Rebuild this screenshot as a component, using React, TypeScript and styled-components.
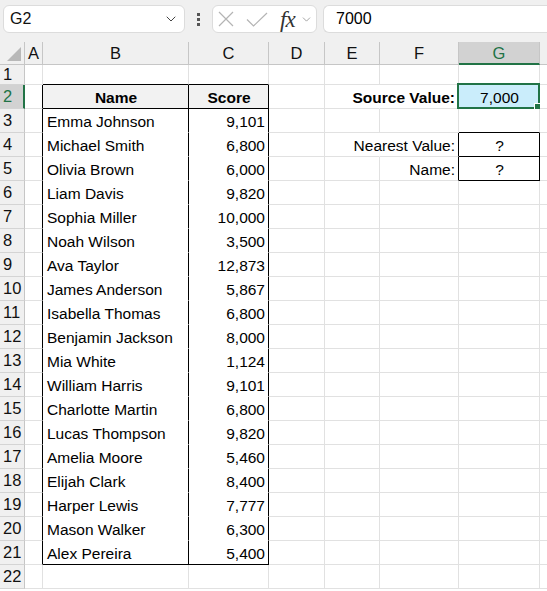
import React from 'react';
import styled, { createGlobalStyle } from 'styled-components';
import { ChevronDown } from 'lucide-react';

const GREEN = '#217346';
const GRID = '#e1e1e1';
const HEAD_BG = '#f0f0f0';
const HEAD_LINE = '#c6c6c6';

const GlobalStyle = createGlobalStyle`
  html, body {
    margin: 0;
    padding: 0;
    background: #fff;
    font-family: 'Liberation Sans', Arial, sans-serif;
    color: #000;
  }
`;

const Page = styled.div`
  width: 547px;
  height: 591px;
  overflow: hidden;
  background: #fff;
`;

const Toolbar = styled.div`
  height: 42px;
  box-sizing: border-box;
  background: #f0f0f0;
  display: flex;
  align-items: flex-start;
  padding: 5px 0 0 3px;
`;

const Box = styled.div<{ $w?: number }>`
  width: ${(p) => (p.$w ? `${p.$w}px` : 'auto')};
  height: 28px;
  box-sizing: border-box;
  background: #fff;
  border: 1px solid #dcdcdc;
  border-radius: 6px;
  display: flex;
  align-items: center;
  flex-shrink: 0;
`;

const NameBox = styled(Box)`
  justify-content: space-between;
  padding: 0 5px 0 6px;
  font-size: 16px;
  color: #111;
`;

const Dots = styled.div`
  width: 27px;
  height: 28px;
  flex-shrink: 0;
  display: flex;
  flex-direction: column;
  align-items: center;
  justify-content: center;
  gap: 2px;
  span {
    width: 3px;
    height: 3px;
    background: #555;
  }
`;

const FuncBox = styled(Box)`
  padding-left: 5px;
  color: #b4b4b4;
  svg {
    flex-shrink: 0;
  }
`;

const Fx = styled.span`
  font-family: 'Liberation Serif', 'Times New Roman', serif;
  font-style: italic;
  font-size: 23px;
  color: #333;
  margin: 0 5px 0 12px;
  letter-spacing: -1px;
  line-height: 1;
`;

const Formula = styled(Box)`
  flex: 1;
  margin-left: 6px;
  padding-left: 12px;
  font-size: 16px;
  border-right: none;
  border-radius: 6px 0 0 6px;
`;

const Sheet = styled.div`
  display: grid;
  grid-template-columns: 25px 18px 146px 80px 56px 55px 79px 81px 1fr;
  grid-template-rows: 23px 20px repeat(21, 24px);
  font-size: 15.5px;
`;

const Corner = styled.div`
  background: ${HEAD_BG};
  border-right: 1px solid ${HEAD_LINE};
  border-bottom: 1px solid ${HEAD_LINE};
  box-sizing: border-box;
  position: relative;
  &::after {
    content: '';
    position: absolute;
    right: 3px;
    bottom: 3px;
    border-style: solid;
    border-width: 0 0 14px 14px;
    border-color: transparent transparent #b8b8b8 transparent;
  }
`;

const ColHead = styled.div<{ $active?: boolean }>`
  box-sizing: border-box;
  display: flex;
  align-items: center;
  justify-content: center;
  background: ${(p) => (p.$active ? '#d2d2d2' : HEAD_BG)};
  color: ${(p) => (p.$active ? GREEN : '#111')};
  border-right: 1px solid ${HEAD_LINE};
  border-bottom: ${(p) => (p.$active ? `2px solid ${GREEN}` : `1px solid ${HEAD_LINE}`)};
  padding-top: ${(p) => (p.$active ? '1px' : '0')};
  font-size: 16.5px;
`;

const RowHead = styled.div<{ $active?: boolean }>`
  box-sizing: border-box;
  display: flex;
  align-items: center;
  padding-left: 3px;
  background: ${(p) => (p.$active ? '#d2d2d2' : HEAD_BG)};
  color: ${(p) => (p.$active ? GREEN : '#111')};
  border-right: ${(p) => (p.$active ? `2px solid ${GREEN}` : `1px solid ${HEAD_LINE}`)};
  border-bottom: 1px solid #d4d4d4;
  font-size: 16.5px;
`;

const Cell = styled.div<{
  $align?: 'left' | 'right' | 'center';
  $bold?: boolean;
  $bg?: string;
  $right?: string;
  $bottom?: string;
}>`
  box-sizing: border-box;
  position: relative;
  display: flex;
  align-items: center;
  justify-content: ${(p) =>
    p.$align === 'right' ? 'flex-end' : p.$align === 'center' ? 'center' : 'flex-start'};
  padding: 2px 3px 0 4px;
  white-space: nowrap;
  overflow: visible;
  font-weight: ${(p) => (p.$bold ? 700 : 400)};
  background: ${(p) => p.$bg || '#fff'};
  border-right: 1px solid ${(p) => p.$right || GRID};
  border-bottom: 1px solid ${(p) => p.$bottom || GRID};
`;

const Selection = styled.div`
  position: absolute;
  left: -2px;
  top: -2px;
  right: -1px;
  bottom: -1px;
  border: 2px solid ${GREEN};
  pointer-events: none;
  &::after {
    content: '';
    position: absolute;
    right: -4px;
    bottom: -4px;
    width: 6px;
    height: 6px;
    background: ${GREEN};
    border: 1px solid #fff;
  }
`;

const people: [string, string][] = [
  ['Emma Johnson', '9,101'],
  ['Michael Smith', '6,800'],
  ['Olivia Brown', '6,000'],
  ['Liam Davis', '9,820'],
  ['Sophia Miller', '10,000'],
  ['Noah Wilson', '3,500'],
  ['Ava Taylor', '12,873'],
  ['James Anderson', '5,867'],
  ['Isabella Thomas', '6,800'],
  ['Benjamin Jackson', '8,000'],
  ['Mia White', '1,124'],
  ['William Harris', '9,101'],
  ['Charlotte Martin', '6,800'],
  ['Lucas Thompson', '9,820'],
  ['Amelia Moore', '5,460'],
  ['Elijah Clark', '8,400'],
  ['Harper Lewis', '7,777'],
  ['Mason Walker', '6,300'],
  ['Alex Pereira', '5,400'],
];

const COLS = ['A', 'B', 'C', 'D', 'E', 'F', 'G', 'H'];
const INK = '#000';

type CellSpec = {
  text?: string;
  align?: 'left' | 'right' | 'center';
  bold?: boolean;
  bg?: string;
  right?: string;
  bottom?: string;
  selected?: boolean;
};

function spec(col: string, row: number): CellSpec {
  const s: CellSpec = {};
  const inTable = row >= 2 && row <= 21;
  if (col === 'A' && inTable) s.right = INK;
  if ((col === 'B' || col === 'C') && row === 1) s.bottom = INK;
  if ((col === 'B' || col === 'C') && inTable) {
    s.right = INK;
    s.bottom = row === 2 || row === 21 ? INK : '#fff';
    if (row === 2) {
      s.bg = '#f2f2f2';
      s.bold = true;
      s.align = 'center';
      s.text = col === 'B' ? 'Name' : 'Score';
    } else {
      const p = people[row - 3];
      s.text = col === 'B' ? p[0] : p[1];
      s.align = col === 'B' ? 'left' : 'right';
    }
  }
  if (col === 'E' && (row === 2 || row === 4)) s.right = '#fff';
  if (col === 'F') {
    if (row === 2) Object.assign(s, { text: 'Source Value:', bold: true, align: 'right' });
    if (row === 4) Object.assign(s, { text: 'Nearest Value:', align: 'right', right: INK });
    if (row === 5) Object.assign(s, { text: 'Name:', align: 'right', right: INK });
  }
  if (col === 'G') {
    if (row === 2) Object.assign(s, { text: '7,000', align: 'center', bg: '#caedfb', selected: true });
    if (row === 3) s.bottom = INK;
    if (row === 4 || row === 5) Object.assign(s, { text: '?', align: 'center', right: INK, bottom: INK });
  }
  return s;
}

const rows = Array.from({ length: 22 }, (_, i) => i + 1);

export default function App() {
  return (
    <Page>
      <GlobalStyle />
      <Toolbar>
        <NameBox $w={182}>
          <span>G2</span>
          <ChevronDown size={16} strokeWidth={1.5} color="#444" />
        </NameBox>
        <Dots>
          <span />
          <span />
          <span />
        </Dots>
        <FuncBox $w={105}>
          <svg width="16" height="16" viewBox="0 0 16 16" fill="none" stroke="currentColor" strokeWidth="1.2">
            <path d="M1 1 15 15M15 1 1 15" />
          </svg>
          <svg width="22" height="15" viewBox="0 0 22 15" fill="none" stroke="currentColor" strokeWidth="1.2" style={{ marginLeft: 12 }}>
            <path d="M1 7.5 7.5 14 21 1" />
          </svg>
          <Fx>fx</Fx>
          <ChevronDown size={13} strokeWidth={1.4} color="#888" />
        </FuncBox>
        <Formula>7000</Formula>
      </Toolbar>
      <Sheet>
        <Corner />
        {COLS.map((c) => (
          <ColHead key={c} $active={c === 'G'}>
            {c === 'H' ? '' : c}
          </ColHead>
        ))}
        {rows.map((r) => (
          <React.Fragment key={r}>
            <RowHead $active={r === 2}>{r}</RowHead>
            {COLS.map((c) => {
              const s = spec(c, r);
              return (
                <Cell
                  key={c}
                  $align={s.align}
                  $bold={s.bold}
                  $bg={s.bg}
                  $right={s.right}
                  $bottom={s.bottom}
                >
                  {s.text}
                  {s.selected && <Selection />}
                </Cell>
              );
            })}
          </React.Fragment>
        ))}
      </Sheet>
    </Page>
  );
}
